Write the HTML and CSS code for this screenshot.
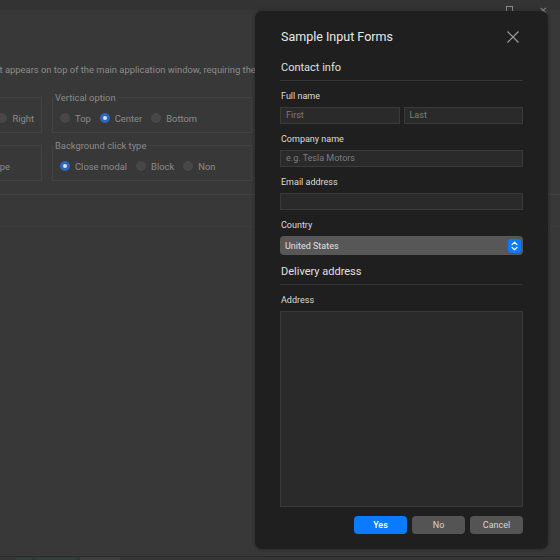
FILE: index.html
```html
<!DOCTYPE html>
<html lang="en">

<head>
    <meta charset="UTF-8" />
    <meta name="viewport" content="width=device-width, initial-scale=1.0" />
    <title>Modal dialog</title>
    <link rel="stylesheet" href="styles.css">
</head>

<body>
    <div class="window">
        <div class="titlebar">
            <span class="ctl ctl-max"></span>
            <span class="ctl ctl-close">&#x2715;</span>
        </div>

        <main class="app">
            <p class="desc">A modal dialog is a window that appears on top of the main application window, requiring the user to respond before continuing.</p>

            <div class="options">
                <fieldset class="group group-left">
                    <legend>Horizontal option</legend>
                    <div class="radios">
                        <span class="radio"></span><span class="radio-label">Left</span>
                        <span class="radio"></span><span class="radio-label">Center</span>
                        <span class="radio"></span><span class="radio-label">Right</span>
                    </div>
                </fieldset>
                <fieldset class="group">
                    <legend>Vertical option</legend>
                    <div class="radios">
                        <span class="radio"></span><span class="radio-label">Top</span>
                        <span class="radio checked"></span><span class="radio-label">Center</span>
                        <span class="radio"></span><span class="radio-label">Bottom</span>
                    </div>
                </fieldset>
                <fieldset class="group group-left">
                    <legend>Presentation</legend>
                    <div class="radios radios-type">
                        <span class="radio checked"></span><span class="radio-label">Modal</span>
                        <span class="radio"></span><span class="radio-label">Sheet type</span>
                    </div>
                </fieldset>
                <fieldset class="group">
                    <legend>Background click type</legend>
                    <div class="radios">
                        <span class="radio checked"></span><span class="radio-label">Close modal</span>
                        <span class="radio"></span><span class="radio-label">Block</span>
                        <span class="radio"></span><span class="radio-label">Non</span>
                    </div>
                </fieldset>
            </div>

            <hr class="sep">
            <div class="panel"></div>
        </main>

        <footer class="tabs">
            <span class="tab tab-on"></span>
            <span class="tab tab-on wide"></span>
            <span class="tab wide"></span>
        </footer>
    </div>

    <div class="modal">
        <div class="modal-head">
            <h2>Sample Input Forms</h2>
            <svg class="close" width="12" height="12" viewBox="0 0 12 12">
                <path d="M0.5 0.5 L11.5 11.5 M11.5 0.5 L0.5 11.5" stroke="#a0a0a0" stroke-width="1.2" fill="none" />
            </svg>
        </div>

        <h3 class="section">Contact info</h3>

        <div class="field">
            <label>Full name</label>
            <div class="pair">
                <div class="input placeholder">First</div>
                <div class="input placeholder">Last</div>
            </div>
        </div>

        <div class="field">
            <label>Company name</label>
            <div class="input placeholder">e.g. Tesla Motors</div>
        </div>

        <div class="field">
            <label>Email address</label>
            <div class="input"></div>
        </div>

        <div class="field">
            <label>Country</label>
            <div class="select">
                <span>United States</span>
                <span class="stepper">
                    <svg width="7" height="10" viewBox="0 0 7 10">
                        <path d="M1 3.6 L3.5 1.2 L6 3.6 M1 6.4 L3.5 8.8 L6 6.4" stroke="#fff" stroke-width="1.2" fill="none" stroke-linecap="round" stroke-linejoin="round" />
                    </svg>
                </span>
            </div>
        </div>

        <h3 class="section section-delivery">Delivery address</h3>

        <div class="field">
            <label>Address</label>
            <div class="input textarea"></div>
        </div>

        <div class="buttons">
            <button class="btn btn-primary">Yes</button>
            <button class="btn">No</button>
            <button class="btn">Cancel</button>
        </div>
    </div>
</body>

</html>
```

FILE: styles.css
```css
* {
    box-sizing: border-box;
    margin: 0;
    padding: 0;
}

body {
    width: 560px;
    height: 560px;
    overflow: hidden;
    position: relative;
    background: #383838;
    font-family: Roboto, "Liberation Sans", sans-serif;
}

.window {
    height: 100%;
    display: flex;
    flex-direction: column;
}

/* window title bar, mostly hidden under the modal */
.titlebar {
    height: 10px;
    flex-shrink: 0;
    background: #333333;
    display: flex;
    justify-content: flex-end;
    gap: 26px;
    padding-right: 13px;
}

.ctl {
    margin-top: 6px;
    height: 10px;
    color: #8a8a8a;
    font-size: 10px;
    line-height: 10px;
}

.ctl-max {
    width: 7px;
    border: 1px solid #8a8a8a;
}

.app {
    flex: 1;
    overflow: hidden;
}

.desc {
    margin: 54px 0 0 -130px;
    white-space: nowrap;
    font-size: 9.4px;
    line-height: 12px;
    color: #8c8c8c;
}

.options {
    display: grid;
    grid-template-columns: 217px 200px;
    column-gap: 10px;
    row-gap: 7px;
    margin: 16px 0 0 -175px;
}

.group {
    border: 1px solid #424242;
    padding: 8px 7px 7px;
    min-inline-size: 0;
}

.group legend {
    font-size: 9.4px;
    line-height: 11px;
    color: #8c8c8c;
    padding: 0 2px;
    margin-left: -7px;
}

.radios {
    display: flex;
    align-items: center;
    height: 14px;
    font-size: 9.4px;
    color: #8c8c8c;
}

.group-left .radios {
    justify-content: flex-end;
}

.group-left .radios-type {
    padding-right: 24px;
}

.radio {
    width: 10px;
    height: 10px;
    border-radius: 50%;
    background: #474747;
    margin-right: 5px;
    display: flex;
    align-items: center;
    justify-content: center;
    flex-shrink: 0;
}

.radio.checked {
    background: #2c67bd;
}

.radio.checked::after {
    content: "";
    width: 4px;
    height: 4px;
    border-radius: 50%;
    background: #e0e0e0;
}

.radio-label {
    margin-right: 9px;
}

.radio-label:last-child {
    margin-right: 0;
}

.sep {
    border: 0;
    border-top: 1px solid #414141;
    margin-top: 13px;
}

.panel {
    height: 32px;
    border-bottom: 1px solid #3b3b3b;
}

.tabs {
    height: 4px;
    flex-shrink: 0;
    background: #353535;
    border-top: 1px solid #2c2c2c;
    display: flex;
    gap: 4px;
    padding-left: 16px;
}

.tab {
    width: 16px;
    height: 3px;
    background: #3e3e3e;
}

.tab-on {
    background: #2f403e;
}

.wide {
    width: 40px;
}

/* modal */
.modal {
    position: absolute;
    left: 255px;
    top: 11px;
    width: 293px;
    height: 538px;
    background: #1f1f1f;
    border-radius: 7px;
    box-shadow: 0 0 4px rgba(0, 0, 0, 0.35);
    padding: 16px 25px 15px;
    display: flex;
    flex-direction: column;
    color: #dedede;
}

.modal-head {
    display: flex;
    align-items: center;
    justify-content: space-between;
    height: 20px;
}

.modal-head h2 {
    font-size: 12.5px;
    font-weight: 400;
    line-height: 20px;
    color: #e8e8e8;
    padding-left: 1px;
}

.close {
    margin-right: 4px;
}

.section {
    font-size: 11px;
    font-weight: 400;
    line-height: 16px;
    color: #e0e0e0;
    margin-top: 13px;
    padding: 0 0 4px 1px;
    border-bottom: 1px solid #363636;
}

.section-delivery {
    margin-top: 9px;
}

.field {
    margin-top: 8px;
}

.field label {
    display: block;
    font-size: 9px;
    line-height: 14px;
    margin-bottom: 4px;
    color: #dcdcdc;
    padding-left: 1px;
}

.pair {
    display: flex;
    gap: 4px;
}

.pair .input {
    flex: 1;
}

.input {
    height: 17px;
    background: #2a2a2a;
    border: 1px solid #3a3a3a;
    padding-left: 5px;
    font-size: 9px;
    line-height: 15px;
}

.placeholder {
    color: #7c7c7c;
}

.textarea {
    height: 196px;
}

.select {
    height: 19px;
    background: #575757;
    border-radius: 4px;
    display: flex;
    align-items: center;
    justify-content: space-between;
    padding: 0 2px 0 5px;
    font-size: 9px;
    color: #e2e2e2;
}

.stepper {
    width: 13px;
    height: 14px;
    border-radius: 3px;
    background: #0a7aff;
    display: flex;
    align-items: center;
    justify-content: center;
}

.buttons {
    margin-top: 9px;
    display: flex;
    justify-content: flex-end;
    gap: 5px;
}

.btn {
    width: 53px;
    height: 18px;
    border: 0;
    border-radius: 4px;
    background: #545454;
    color: #d6d6d6;
    font-family: inherit;
    font-size: 9px;
}

.btn-primary {
    background: #0a7aff;
    color: #ffffff;
    font-weight: 500;
}
```
